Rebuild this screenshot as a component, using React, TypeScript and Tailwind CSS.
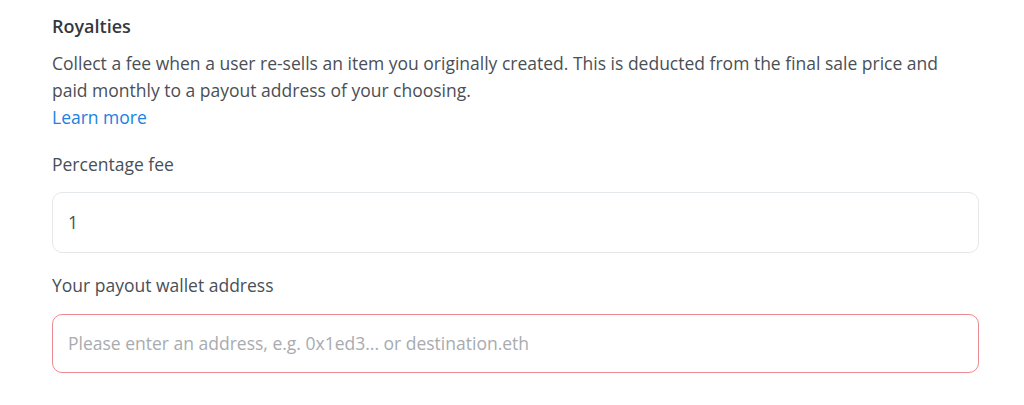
export default function App() {
  return (
    <div className="w-[1024px] h-[405px] bg-white overflow-hidden" style={{ fontFamily: '"Open Sans", "Noto Sans", sans-serif' }}>
      <div className="pl-[52px] w-[979px] pt-[14px] text-[#353840]">
        <h2 className="text-[18px] font-semibold leading-[24px] h-[24px]">Royalties</h2>
        <p className="mt-[12px] max-w-[905px] text-[17.5px] leading-[27px] text-[#4a4f56]">
          Collect a fee when a user re-sells an item you originally created. This is deducted from the final sale price and paid monthly to a payout address of your choosing.
          <br />
          <a href="#" className="text-[#2081e2]">Learn more</a>
        </p>
        <label className="block mt-[21px] text-[17.5px] leading-[24px] text-[#4a4f56]">Percentage fee</label>
        <div className="mt-[16px] h-[61px] border border-[#e5e8eb] rounded-[10px] flex items-center px-[15px] text-[17.5px] text-[#4a4f56]">1</div>
        <label className="block mt-[20px] text-[17.5px] leading-[24px] text-[#4a4f56]">Your payout wallet address</label>
        <div className="mt-[17px] h-[59px] border border-[#eb8a8f] rounded-[10px] flex items-center px-[15px] text-[17.5px] text-[#a8abaf]">
          Please enter an address, e.g. 0x1ed3... or destination.eth
        </div>
      </div>
    </div>
  );
}
